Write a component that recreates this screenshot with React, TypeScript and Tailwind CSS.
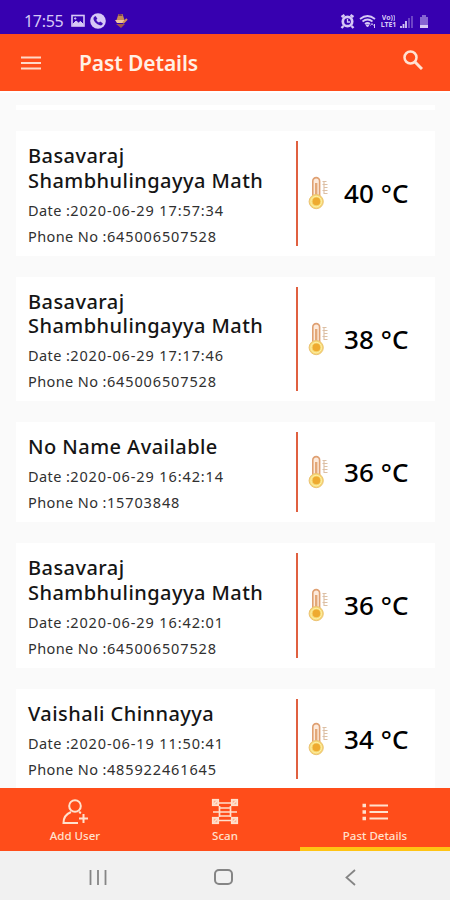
import React from 'react';

type Entry = { name: string[]; date: string; phone: string; temp: string };

const entries: Entry[] = [
  { name: ['Basavaraj', 'Shambhulingayya Math'], date: '2020-06-29 17:57:34', phone: '645006507528', temp: '40' },
  { name: ['Basavaraj', 'Shambhulingayya Math'], date: '2020-06-29 17:17:46', phone: '645006507528', temp: '38' },
  { name: ['No Name Available'], date: '2020-06-29 16:42:14', phone: '15703848', temp: '36' },
  { name: ['Basavaraj', 'Shambhulingayya Math'], date: '2020-06-29 16:42:01', phone: '645006507528', temp: '36' },
  { name: ['Vaishali Chinnayya'], date: '2020-06-19 11:50:41', phone: '485922461645', temp: '34' },
];

function Thermometer() {
  return (
    <svg className="h-[34px] w-[22px] shrink-0" viewBox="0 0 22 34" fill="none">
      <path d="M4.8 21V5a3.4 3.400 0 0 1 6.800 0v16" fill="#fdeadb" stroke="#dfa072" strokeWidth="1.600" />
      <path d="M8.200 7v18" stroke="#e3a878" strokeWidth="2.400" />
      <circle cx="8.200" cy="25.600" r="7.100" fill="#f6d873" stroke="#ecc272" strokeWidth="1" />
      <circle cx="8.200" cy="25.600" r="5.300" stroke="#fff0a8" strokeWidth="1" />
      <circle cx="8.400" cy="25.400" r="3.800" fill="#eeaa30" />
      <path d="M14.500 5.500h4M14.500 8.500h5M15.500 11.500h4M14.500 14.500h5M15.500 17.500h4M16 5v13" stroke="#dcbfa4" strokeWidth="1.100" />
    </svg>
  );
}

function Card({ entry }: { entry: Entry }) {
  return (
    <div className="flex shrink-0 bg-white py-[10px]">
      <div className="-mb-[3px] w-[280px] whitespace-nowrap pl-[12px] pt-[3px]">
        <div className="text-[20px] font-medium leading-[24.5px] tracking-[0.45px] text-[#151515]">
          {entry.name.map((line) => (
            <div key={line}>{line}</div>
          ))}
        </div>
        <div className="mt-[3.5px] text-[14.5px] leading-[26px] tracking-[0.4px] text-[#303030]">
          <div>
            Date :<span className="tracking-[0.88px]">{entry.date}</span>
          </div>
          <div>
            Phone No :<span className="tracking-[0.88px]">{entry.phone}</span>
          </div>
        </div>
      </div>
      <div className="w-[2px] shrink-0 bg-[#e06040]" />
      <div className="flex items-center pl-[10px]">
        <Thermometer />
        <div className="ml-[14px] whitespace-nowrap text-[26px] font-medium leading-[30px] tracking-[0.1px] text-black">{entry.temp} °C</div>
      </div>
    </div>
  );
}

function StatusBar() {
  return (
    <div className="flex h-[34px] shrink-0 items-center bg-[#3700b0] pl-[24px] pr-[20px] pt-[7px] text-[#d6c8f6]">
      <span className="w-[47px] text-[16px] leading-[20px] tracking-[-0.3px]">17:55</span>
      <svg className="h-[14px] w-[14px]" viewBox="0 0 14 14" fill="none" stroke="currentColor">
        <rect x="1" y="1.5" width="12" height="10.5" strokeWidth="1.6" />
        <path d="m2 10 3-3 2.5 2 2-1.5L12 10v1.5H2z" fill="currentColor" />
        <circle cx="4.2" cy="4.5" r=".7" fill="currentColor" />
      </svg>
      <svg className="ml-[5px] h-[16px] w-[16px]" viewBox="0 0 16 16">
        <circle cx="8" cy="8" r="7.8" fill="currentColor" />
        <path d="m4 4 1.6-1 1.8 2.7-1.1 1.1c.4 1.3 1.4 2.2 2.7 2.8l1.2-1.1 2.6 1.7c-.3 1.8-1.5 2.5-3 2.1C6.500 11.300 4 8.500 3.500 6.200c-.1-.8 0-1.600.5-2.200Z" fill="#4310b8" />
      </svg>
      <svg className="ml-[7px] h-[16px] w-[16px]" viewBox="0 0 16 16">
        <path d="M5.500 1h4l2 6h-8z" fill="#c58a58" />
        <path d="M5.500 1h3l1 2h-4z" fill="#7c4056" />
        <path d="M2 7h10l-2 3H4z" fill="#f0c49d" />
        <path d="M3 11h9l-4 4z" fill="#9c5650" />
        <path d="m10 10 4-4" stroke="#d49255" strokeWidth="2" />
      </svg>
      <svg className="ml-auto h-[18px] w-[92px]" viewBox="0 0 92 18" fill="none" stroke="currentColor">
        <path d="m3.500 5 3-2M12.500 3l3 2M5.500 14l-2 2M13.500 14l2 2" strokeWidth="2.400" />
        <circle cx="9.500" cy="9.500" r="4.700" strokeWidth="2.700" />
        <path d="M9.500 7v3h2.500" strokeWidth="1.300" />
        <path d="M22 7q7.500-6 15 0M24.500 9.500q5-4 10 0M27 12q2.500-2 5 0" strokeWidth="1.700" />
        <path d="m29.500 15-1.500-2h3z" fill="currentColor" />
        <path d="m32.500 13.500 1.500-2 1.500 2M36.500 12v4" strokeWidth="1" />
      </svg>
      <div className="-ml-[51px] mr-[2px] flex w-[19px] flex-col items-center text-[7px] font-bold leading-[7px]">
        <span className="h-[7px] overflow-hidden">Vo))</span>
        <span className="h-[7px] overflow-hidden">LTE1</span>
      </div>
      <svg className="h-[18px] w-[30px]" viewBox="62 0 30 18" fill="none" stroke="currentColor">
        <path d="M63 14v2M65.500 12v4M68 9v7" strokeWidth="1.800" />
        <path d="M71 6v10M74 4v12" strokeWidth="1.500" opacity=".45" />
        <path d="M82 5h8v11h-8zM84 3h4v2h-4z" fill="currentColor" stroke="none" opacity=".5" />
        <path d="M82 13h8v3h-8z" fill="currentColor" stroke="none" />
      </svg>
    </div>
  );
}

function Corner({ x, y }: { x: number; y: number }) {
  return (
    <g transform={`translate(${x} ${y})`}>
      <rect x=".8" y=".8" width="5.400" height="5.400" strokeWidth="1.800" fill="#ffac8c" />
      <path d="m2 5 3-3" strokeWidth="1.500" />
    </g>
  );
}

function Tab({ label, active, children }: { label: string; active?: boolean; children: React.ReactNode }) {
  return (
    <div className={active ? 'flex flex-1 flex-col items-center border-b-4 border-[#ffc414] pt-[10px]' : 'flex flex-1 flex-col items-center pt-[10px]'}>
      {children}
      <span className="mt-[1.5px] text-[11.500px] font-medium leading-[16px] text-[#ffe1cd]">{label}</span>
    </div>
  );
}

export default function App() {
  return (
    <div className="flex h-[900px] w-[450px] flex-col overflow-hidden bg-[#fafafa] font-['Noto_Sans','Open_Sans',sans-serif]">
      <StatusBar />
      <header className="flex h-[57px] shrink-0 items-center bg-[#ff4d1a] pl-[21px] pr-[27px] text-[#fff0e5]">
        <svg className="h-[14px] w-[20px]" viewBox="0 0 20 14" stroke="#ffd9c8" strokeWidth="2">
          <path d="M0 1.500h20M0 7h20M0 12.500h20" />
        </svg>
        <h1 className="ml-[38px] text-[21px] font-semibold leading-[28px] tracking-[-0.1px]">Past Details</h1>
        <svg className="mb-[5px] ml-auto h-[20px] w-[20px]" viewBox="0 0 20 20" fill="none" stroke="#ffe2d2" strokeWidth="2.500">
          <circle cx="7.500" cy="7.500" r="6" />
          <path d="m12 12 7 7" strokeWidth="3" />
        </svg>
      </header>
      <main className="flex min-h-0 flex-1 flex-col gap-[21px] overflow-hidden border-t-2 border-white pl-[16px] pr-[15px]">
        <div className="mt-[12px] h-[5px] shrink-0 bg-white" />
        {entries.map((entry, i) => (
          <Card key={i} entry={entry} />
        ))}
      </main>
      <nav className="flex h-[63px] shrink-0 bg-[#ff4d1a]">
        <Tab label="Add User">
          <svg className="h-[28px] w-[28px]" viewBox="0 0 28 28" fill="none" stroke="#ffe1cd" strokeWidth="2">
            <circle cx="14" cy="8" r="5.800" />
            <path d="M17 25H2.500c0-5 2.500-9 7.500-11M18 14l2 1M18 20.500h9M22.500 16v9" />
          </svg>
        </Tab>
        <Tab label="Scan">
          <svg className="h-[28px] w-[28px]" viewBox="0 0 28 28" fill="none" stroke="#ffe1cd">
            <Corner x={1} y={1} />
            <Corner x={20} y={1} />
            <Corner x={1} y={19} />
            <Corner x={20} y={19} />
            <path d="M8 5h12M8 10h12M2 14h24M8 18h12M8 22.500h12M8.500 8v11M19.500 8v11" strokeWidth="1.700" />
          </svg>
        </Tab>
        <Tab label="Past Details" active>
          <svg className="h-[28px] w-[28px]" viewBox="0 0 28 28" stroke="#ffe1cd">
            <path d="M8.500 7.500H27M8.500 14H27M8.500 20.500H27" strokeWidth="2.200" />
            <path d="M1.500 7.500H5M1.500 14H5M1.500 20.500H5" strokeWidth="3.600" />
          </svg>
        </Tab>
      </nav>
      <footer className="flex h-[49px] shrink-0 items-center bg-[#f1f1f1] pl-[89px] pt-[3px]">
        <svg className="h-[17px] w-[18px]" viewBox="0 0 18 17" stroke="#858585" strokeWidth="1.800">
          <path d="M1.500 1v15M9 1v15M16.500 1v15" />
        </svg>
        <div className="ml-[107px] h-[16px] w-[19px] rounded-[5px] border-2 border-[#858585]" />
        <svg className="ml-[112px] h-[17px] w-[11px]" viewBox="0 0 11 17" fill="none" stroke="#858585" strokeWidth="1.800">
          <path d="M10 1 1.500 8.500 10 16" />
        </svg>
      </footer>
    </div>
  );
}
